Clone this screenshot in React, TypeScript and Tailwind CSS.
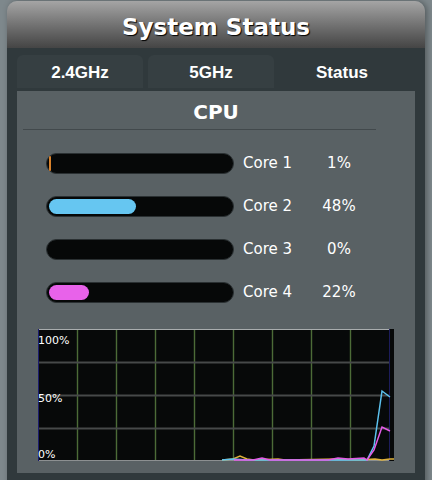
const cores = [
  { name: "Core 1", value: 1, color: "bg-[#d9822b]" },
  { name: "Core 2", value: 48, color: "bg-[#66c6f1]" },
  { name: "Core 3", value: 0, color: "bg-[#66c6f1]" },
  { name: "Core 4", value: 22, color: "bg-[#e862ea]" },
];

const tabs = ["2.4GHz", "5GHz", "Status"];

// history lines in chart pixel coords (356 x 132)
const orange =
  "184,131 195,130 202,127 209,130 216,131 240,130 247,131 300,130 320,131 337,130 344,131 352,130 356,130";
const blue = "184,131 195,130 210,131 320,131 329,131 336,117 344,62 352,68";
const magenta =
  "196,131 215,131 224,129 232,131 290,131 300,129 310,130 326,129 329,131 336,121 344,98 352,102";

function CpuChart() {
  const cols = [1, 2, 3, 4, 5, 6, 7, 8];
  const rows = [33, 66, 99];
  return (
    <svg width="356" height="132" viewBox="0 0 356 132" className="block">
      <rect x="0" y="0" width="356" height="132" fill="#070909" />
      {cols.map((c) => (
        <line key={c} x1={c * 39 + 0.5} y1="0" x2={c * 39 + 0.5} y2="132" stroke="#4c6b37" strokeWidth="1.4" />
      ))}
      {rows.map((r) => (
        <line key={r} x1="0" y1={r + 0.5} x2="352" y2={r + 0.5} stroke="#464949" strokeWidth="2" />
      ))}
      <line x1="0" y1="0.5" x2="352" y2="0.5" stroke="#a9adae" strokeWidth="1" />
      <line x1="0" y1="131.5" x2="352" y2="131.5" stroke="#8c9091" strokeWidth="1" />
      <line x1="0.5" y1="0" x2="0.5" y2="132" stroke="#1c1c6e" strokeWidth="1" />
      <line x1="351.5" y1="0" x2="351.5" y2="132" stroke="#1c1c5a" strokeWidth="1" />
      <polyline points={orange} fill="none" stroke="#e0b23a" strokeWidth="1.5" />
      <polyline points={blue} fill="none" stroke="#5cc2ee" strokeWidth="1.5" />
      <polyline points={magenta} fill="none" stroke="#e45ae6" strokeWidth="1.5" />
      <g fill="#ffffff" fontSize="11" fontFamily="'DejaVu Sans', sans-serif">
        <text x="0" y="15">100%</text>
        <text x="0" y="73">50%</text>
        <text x="0" y="129">0%</text>
      </g>
    </svg>
  );
}

export default function App() {
  return (
    <div className="h-[480px] w-[432px] overflow-hidden bg-[#7e888c] pl-[7px] pt-[1px]">
      <div className="w-[418px] overflow-hidden rounded-t-[10px] shadow-[2px_0_6px_rgba(0,0,0,0.35)]">
        <header className="flex h-[47px] items-center justify-center bg-gradient-to-b from-[#a5a5a5] to-[#454545] pt-[5px]">
          <h1
            className="text-[23px] font-bold text-white [text-shadow:1px_1px_1px_#000]"
            style={{ fontFamily: "'DejaVu Sans', Verdana, sans-serif" }}
          >
            System Status
          </h1>
        </header>

        <div className="h-[440px] bg-[#30393c] px-[10px] pt-[7px]">
          <nav className="flex gap-[5px]">
            {tabs.map((t, i) => (
              <div
                key={t}
                className={
                  "flex h-[33px] w-[126px] items-center justify-center rounded-t-[6px] pt-[3px] text-[17px] font-bold text-white " +
                  (i < 2 ? "bg-[#363f42]" : "")
                }
                style={{ fontFamily: "'Liberation Sans', Arial, sans-serif" }}
              >
                {t}
              </div>
            ))}
          </nav>

          <section
            className="mt-[3px] h-[382px] w-[398px] bg-[#596164] text-white"
            style={{ fontFamily: "'DejaVu Sans', Verdana, sans-serif" }}
          >
            <h2 className="flex h-[38px] items-center justify-center pt-[4px] text-[20px] font-bold">CPU</h2>
            <div className="ml-[6px] h-px w-[353px] bg-[#42494c]" />

            <ul className="mt-[23px] flex flex-col gap-[22px]">
              {cores.map((c) => (
                <li key={c.name} className="flex h-[21px] items-center">
                  <div className="ml-[29px] box-border h-[21px] w-[188px] rounded-full border border-[#2a3032] bg-[#060808] p-[2px]">
                    {c.value > 0 ? (
                      <div className={"h-full rounded-full " + c.color} style={{ width: `${c.value}%` }} />
                    ) : null}
                  </div>
                  <span className="ml-[9px] w-[64px] text-[15px]">{c.name}</span>
                  <span className="w-[64px] text-center text-[15px]">{c.value}%</span>
                </li>
              ))}
            </ul>

            <div className="ml-[21px] mt-[26px]">
              <CpuChart />
            </div>
          </section>
        </div>
      </div>
    </div>
  );
}
